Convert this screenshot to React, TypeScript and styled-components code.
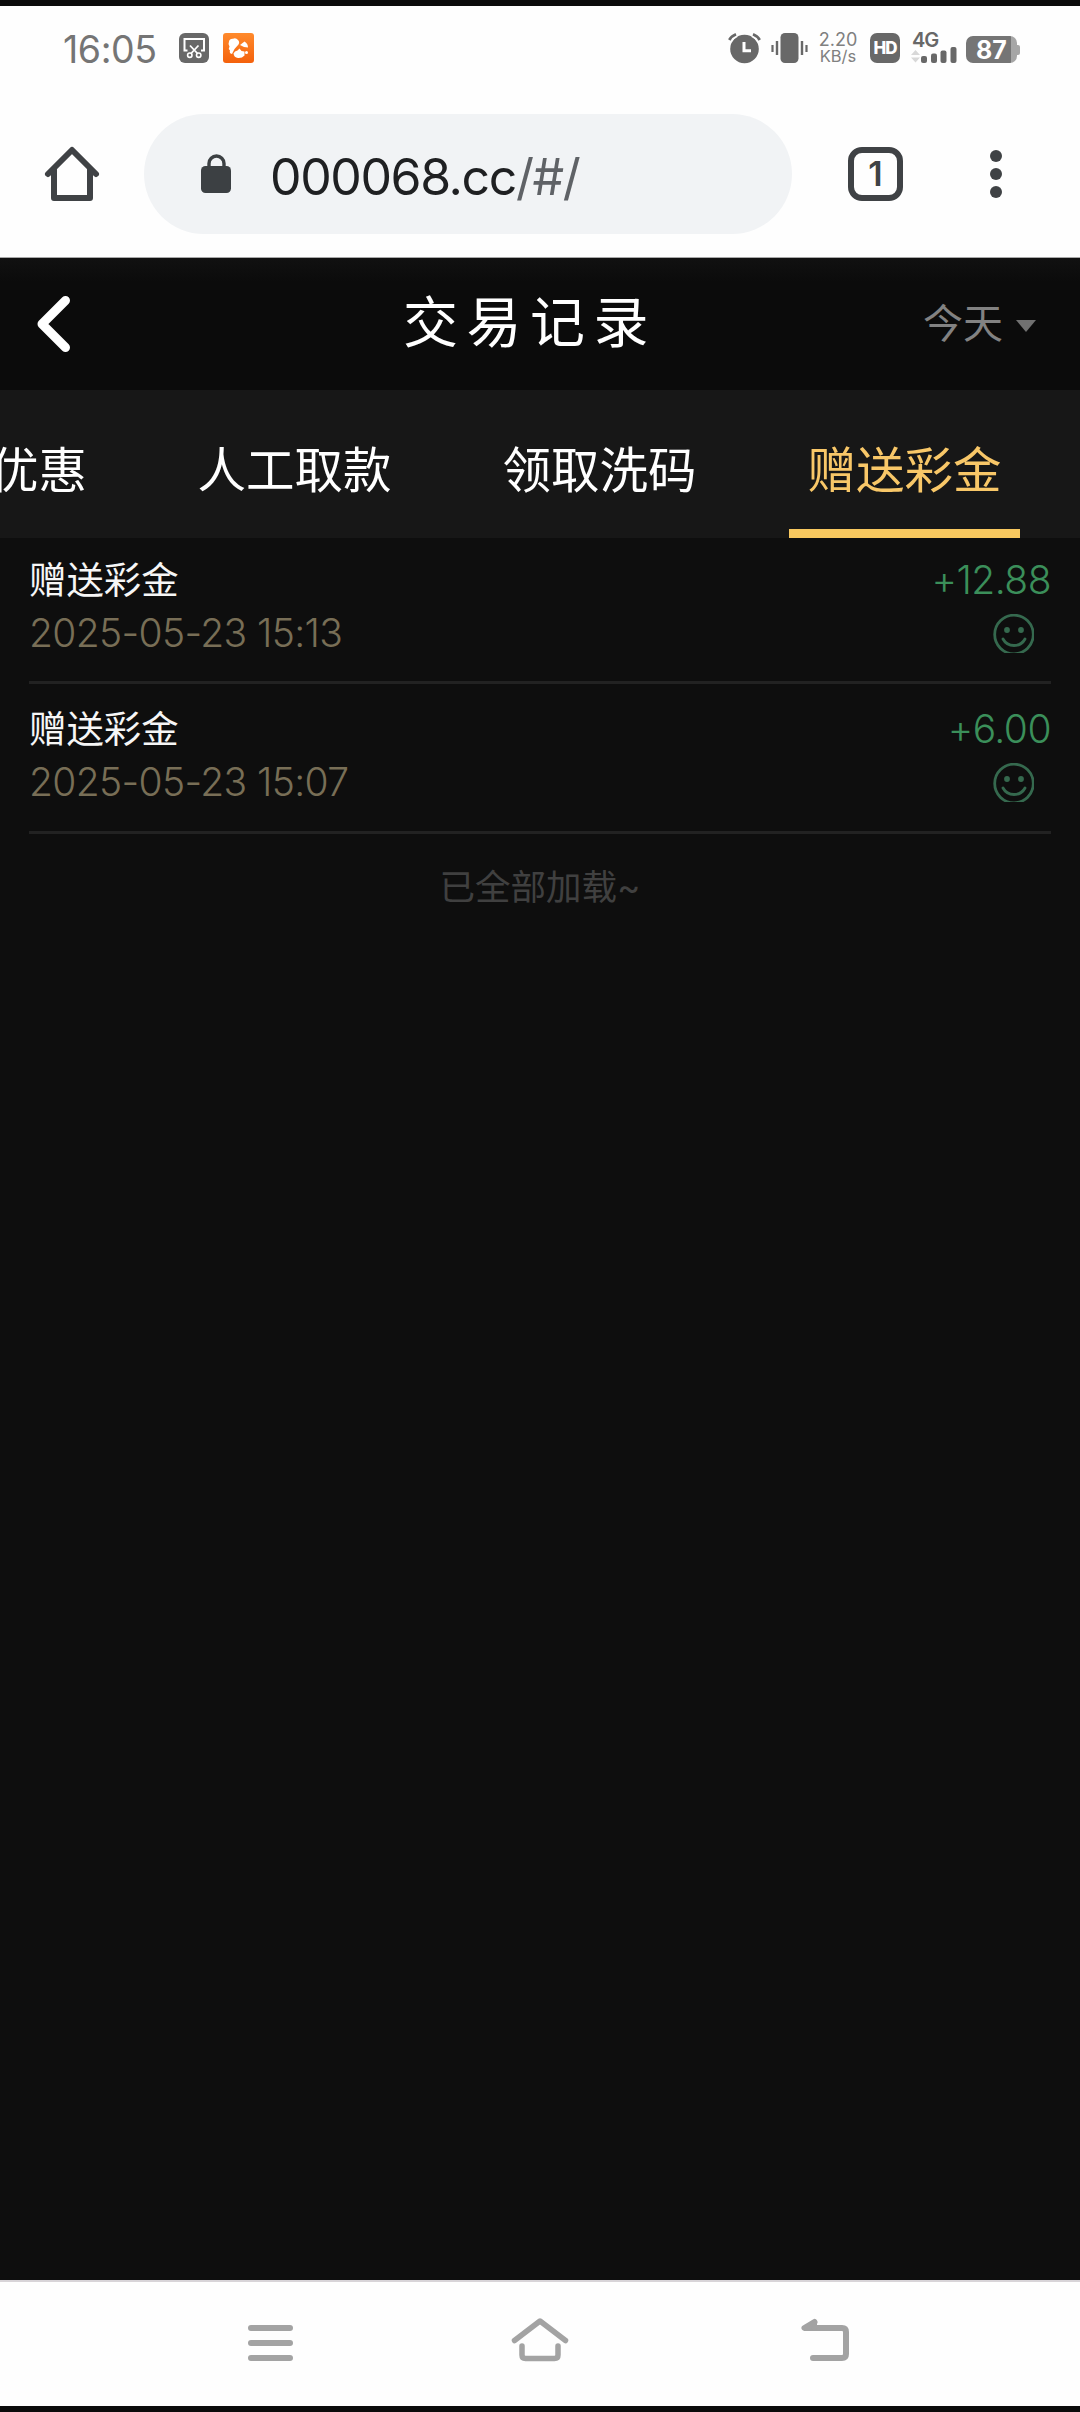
import React from 'react';
import styled, { createGlobalStyle } from 'styled-components';

const Global = createGlobalStyle`
  * { box-sizing: border-box; }
  body { margin: 0; background: #0e0e0e; }
`;

const Screen = styled.div`
  width: 1080px;
  height: 2412px;
  display: flex;
  flex-direction: column;
  overflow: hidden;
  background: #0e0e0e;
  border-top: 6px solid #0b0b0b;
  border-bottom: 6px solid #0b0b0b;
  font-family: Inter, 'Noto Sans CJK SC', sans-serif;
  svg { display: block; flex: none; overflow: visible; }
`;

const StatusBar = styled.div`
  height: 84px;
  flex: none;
  display: flex;
  align-items: center;
  justify-content: space-between;
  padding: 0 60px 0 63px;
  background: #fefefe;
`;

const StatusGroup = styled.div<{ $gap: number }>`
  display: flex;
  align-items: center;
  gap: ${p => p.$gap}px;
`;

const Clock = styled.span`
  width: 102px;
  font-size: 37.5px;
  line-height: 40px;
  letter-spacing: -0.4px;
  color: #757575;
  padding-top: 4px;
`;

const Speed = styled.div`
  width: 40px;
  margin-right: 1px;
  display: flex;
  flex-direction: column;
  align-items: center;
  font-size: 18px;
  line-height: 17px;
  color: #808080;
  white-space: nowrap;
`;

const SpeedUnit = styled.span`
  font-size: 16.5px;
`;

const AddressBar = styled.div`
  height: 168px;
  flex: none;
  display: flex;
  align-items: center;
  padding: 0 0 0 45px;
  background: #fefefe;
  border-bottom: 1px solid #a8a8a8;
`;

const UrlPill = styled.div`
  width: 648px;
  height: 120px;
  margin-left: 45px;
  border-radius: 60px;
  background: #f1f3f5;
  display: flex;
  align-items: center;
  padding-left: 57px;
`;

const UrlText = styled.span`
  margin-left: 39px;
  padding-top: 6px;
  font-size: 50px;
  line-height: 60px;
  letter-spacing: -1.4px;
  color: #1f2022;
  white-space: nowrap;
`;

const UrlPath = styled.span`
  color: #5f6266;
`;

const TabCount = styled.div`
  width: 55px;
  height: 54px;
  margin-left: 56px;
  border: 6px solid #3f4245;
  border-radius: 14px;
  display: flex;
  align-items: center;
  justify-content: center;
  font-size: 34px;
  font-weight: 600;
  color: #3f4245;
`;

const MenuDots = styled.div`
  margin-left: 87px;
  display: flex;
  flex-direction: column;
  gap: 6px;
`;

const Dot = styled.i`
  width: 12px;
  height: 12px;
  border-radius: 50%;
  background: #3f4245;
`;

const Header = styled.header`
  height: 132px;
  flex: none;
  display: grid;
  grid-template-columns: 300px 1fr 300px;
  align-items: center;
  background: linear-gradient(#111 0, #0b0b0b 24px);
`;

const BackButton = styled.div`
  padding-left: 36px;
`;

const Title = styled.h1`
  margin: 0;
  font-size: 55px;
  line-height: 80px;
  font-weight: 400;
  letter-spacing: 8.5px;
  padding: 0 20px 4px 0;
  text-align: center;
  color: #fff;
  white-space: nowrap;
`;

const DayFilter = styled.div`
  display: flex;
  align-items: center;
  justify-content: flex-end;
  gap: 13px;
  padding-right: 44px;
  font-size: 40px;
  line-height: 60px;
  color: #828282;
`;

const Caret = styled.i`
  margin-top: 4px;
  border: 10.5px solid transparent;
  border-top: 12px solid #717171;
  border-bottom: 0;
`;

const Tabs = styled.nav`
  height: 148px;
  flex: none;
  display: flex;
  justify-content: flex-end;
  gap: 74px;
  padding-right: 60px;
  background: #171717;
  overflow: hidden;
`;

const Tab = styled.div<{ $active?: boolean; $indent?: number }>`
  width: 231px;
  flex: none;
  display: flex;
  align-items: center;
  justify-content: center;
  padding-top: 15px;
  padding-left: ${p => p.$indent ?? 0}px;
  border-bottom: 9px solid ${p => (p.$active ? '#f8c85f' : 'transparent')};
  font-size: 48.5px;
  color: ${p => (p.$active ? '#f8c768' : '#fff')};
  white-space: nowrap;
`;

const List = styled.main`
  flex: 1;
  padding: 0 29px;
`;

const Record = styled.div`
  height: 150px;
  display: flex;
  justify-content: space-between;
  border-bottom: 3px solid #222;
  &:first-child { height: 146px; }
  &:first-child > div { padding-top: 16px; }
`;

const Info = styled.div`
  padding-top: 19px;
`;

const RecordName = styled.div`
  font-size: 37.4px;
  line-height: 54px;
  color: #f6f6f6;
`;

const RecordTime = styled.div`
  font-size: 39px;
  line-height: 50px;
  font-weight: 300;
  letter-spacing: -0.63px;
  color: #786e56;
  white-space: nowrap;
`;

const Result = styled.div`
  padding-top: 19px;
  display: flex;
  flex-direction: column;
  align-items: flex-end;
`;

const Amount = styled.div`
  font-size: 39px;
  line-height: 52px;
  font-weight: 300;
  letter-spacing: -0.5px;
  color: #3b8f5a;
`;

const FaceBox = styled.div`
  width: 41px;
  height: 39px;
  margin: 8px 17px 0 0;
  overflow: hidden;
`;

const EndNote = styled.p`
  margin: 27px 0 0;
  text-align: center;
  font-size: 35.5px;
  line-height: 54px;
  color: #404040;
`;

const NavBar = styled.footer`
  height: 126px;
  flex: none;
  display: flex;
  align-items: center;
  padding: 0 0 3px 248px;
  border-top: 2px solid #d8d4d8;
  background: #fefefe;
`;

const NavItem = styled.div<{ $before?: number }>`
  margin-left: ${p => p.$before ?? 0}px;
`;

const ScissorsIcon = () => (
  <svg width="30" height="30" viewBox="0 0 30 30" fill="none">
    <rect width="30" height="30" rx="6" fill="#686868" />
    <path d="M8.500 17.500H5.500V6H25v11.500H22" stroke="#fff" strokeWidth="2" />
    <path d="M11 12.500l7.500 8M19.500 12.500l-7.500 8" stroke="#fff" strokeWidth="1.800" />
    <circle cx="10.800" cy="22.200" r="2.200" stroke="#fff" strokeWidth="1.600" />
    <circle cx="19.700" cy="22.200" r="2.200" stroke="#fff" strokeWidth="1.600" />
  </svg>
);

const SquirrelIcon = () => (
  <svg width="31" height="30" viewBox="0 0 31 30">
    <defs>
      <linearGradient id="sq" x1="0" y1="0" x2="0" y2="1">
        <stop offset="0" stopColor="#ff8a2c" />
        <stop offset="1" stopColor="#f4610c" />
      </linearGradient>
    </defs>
    <rect width="31" height="30" rx="3" fill="url(#sq)" />
    <path d="M6 8.500q.5-3 4-2.800 3-1.200 5 1.300 2 2 .5 4.500l-4 4.500-2.500 5q-3-.5-2-3.500-2-2-.5-4Q4.800 11 6 8.500z" fill="#fff" />
    <path d="M17 12l4.500-3.500q3.500 2 3.500 6l-4-.5z" fill="#fff" />
    <path d="M10.500 20.500q1-2.500 4-3l2-2 2 2.500 3 .5 0 4q-2.500 2.800-6.500 2.500-4-.5-4.500-4.500z" fill="#fff" />
    <circle cx="23.500" cy="19.500" r="1.500" fill="#fff" />
  </svg>
);

const AlarmIcon = () => (
  <svg width="33" height="30" viewBox="0 0 33 30" fill="none">
    <circle cx="16.500" cy="16" r="14.300" fill="#686868" />
    <path d="M1.300 7.500Q3.500 3 8.500 1.200M31.700 7.500Q29.500 3 24.500 1.200" stroke="#fefefe" strokeWidth="6" />
    <path d="M1.300 7Q3.500 3 8 1.200M31.700 7Q29.500 3 25 1.200" stroke="#686868" strokeWidth="2.800" />
    <path d="M16 9v8.800H23" stroke="#fff" strokeWidth="3" />
  </svg>
);

const VibrateIcon = () => (
  <svg width="37" height="30" viewBox="0 0 37 30" fill="none" stroke="#686868">
    <rect x="9.500" width="18" height="30" rx="4.500" fill="#686868" stroke="none" />
    <path d="M1.500 12v7M35.500 12v7" strokeWidth="2.200" />
    <path d="M6 8v14M31 8v14" strokeWidth="2.400" />
  </svg>
);

const HdBadge = styled.div`
  width: 30px;
  height: 30px;
  margin-left: 1px;
  border-radius: 7px;
  background: #686868;
  color: #fff;
  font-size: 17px;
  font-weight: 800;
  line-height: 31px;
  letter-spacing: -1px;
  text-align: center;
`;

const Signal = styled.div`
  width: 46px;
  height: 30px;
  margin-left: 1px;
  position: relative;
`;

const SignalLabel = styled.span`
  position: absolute;
  left: 1px;
  top: -2px;
  font-size: 20px;
  line-height: 18px;
  font-weight: 600;
  letter-spacing: -1px;
  color: #686868;
`;

const SignalBars = () => (
  <svg width="46" height="30" viewBox="0 0 46 30" fill="#686868">
    <path d="M0 22l4.500-5 4.500 5zM0 24.500l4.500 5 4.500-5z" fill="#d8d8d8" />
    <rect x="10" y="23" width="6" height="7" rx="2" />
    <rect x="20" y="20.500" width="6" height="9.500" rx="2" />
    <rect x="29.500" y="17.500" width="6" height="12.500" rx="2" />
    <rect x="39.500" y="14" width="6" height="16" rx="2" />
  </svg>
);

const Battery = styled.div`
  width: 51px;
  height: 27px;
  margin: 3px 3px 0 -1px;
  border-radius: 7px;
  background: linear-gradient(90deg, #757575 45px, #a6a6a6 45px);
  position: relative;
  color: #fff;
  font-size: 25px;
  font-weight: 700;
  line-height: 28px;
  text-align: center;
  &::after {
    content: '';
    position: absolute;
    left: 51px;
    top: 9px;
    width: 3px;
    height: 10px;
    border-radius: 0 2px 2px 0;
    background: #a6a6a6;
  }
`;

const HomeIcon = () => (
  <svg width="54" height="54" viewBox="0 0 54 54" fill="none" stroke="#3f4245" strokeWidth="6" strokeLinecap="round" strokeLinejoin="round">
    <path d="M3 27L27 3l24 24" />
    <path d="M9 23v28h36V23" />
  </svg>
);

const LockIcon = () => (
  <svg width="30" height="39" viewBox="0 0 30 39" fill="none">
    <rect y="12" width="30" height="27" rx="4.500" fill="#3c4043" />
    <path d="M8 14V9.500a7.500 7.500 0 0 1 15 0V14" stroke="#3c4043" strokeWidth="3.400" />
  </svg>
);

const BackChevron = () => (
  <svg width="36" height="58" viewBox="0 0 36 58" fill="none" stroke="#fff" strokeWidth="9" strokeLinecap="round" strokeLinejoin="round">
    <path d="M29.500 5.500L6 29l23.500 23.500" />
  </svg>
);

const FaceIcon = () => (
  <svg width="42" height="42" viewBox="0 0 42 42" fill="none" stroke="#35694e" strokeWidth="2.800">
    <circle cx="21" cy="20.500" r="19.300" />
    <path d="M10 25q3.500 6.500 11 6.500T32 25" strokeLinecap="round" />
    <circle cx="14" cy="16" r="2.900" fill="#35694e" stroke="none" />
    <circle cx="28" cy="16" r="2.900" fill="#35694e" stroke="none" />
  </svg>
);

const RecentsIcon = () => (
  <svg width="45" height="46" viewBox="0 0 45 46" stroke="#a3a3a3" strokeWidth="6" strokeLinecap="round">
    <path d="M3 8h39M3 23h39M3 38h39" />
  </svg>
);

const NavHomeIcon = () => (
  <svg width="58" height="46" viewBox="0 0 58 46" fill="none" stroke="#a3a3a3" strokeWidth="5.500" strokeLinecap="round" strokeLinejoin="round">
    <path d="M3.500 20.500L29 1l25.500 19.500" />
    <path d="M11 26v9q0 3.500 3.500 3.500h29q3.500 0 3.500-3.500v-9" />
  </svg>
);

const NavBackIcon = () => (
  <svg width="48" height="46" viewBox="0 0 48 46" fill="none" stroke="#a3a3a3" strokeWidth="6" strokeLinecap="round" strokeLinejoin="round">
    <path d="M13.500 2L3.500 8H41q4 0 4 4v22q0 4-4 4H12" />
    <path d="M13 3v4" />
  </svg>
);

const tabs = [
  { label: '优惠', indent: 98 },
  { label: '人工取款' },
  { label: '领取洗码' },
  { label: '赠送彩金', active: true },
];

const records = [
  { name: '赠送彩金', time: '2025-05-23 15:13', amount: '+12.88' },
  { name: '赠送彩金', time: '2025-05-23 15:07', amount: '+6.00' },
];

export default function App() {
  return (
    <Screen>
      <Global />
      <StatusBar>
        <StatusGroup $gap={14}>
          <Clock>16:05</Clock>
          <ScissorsIcon />
          <SquirrelIcon />
        </StatusGroup>
        <StatusGroup $gap={10}>
          <AlarmIcon />
          <VibrateIcon />
          <Speed>
            2.20
            <SpeedUnit>KB/s</SpeedUnit>
          </Speed>
          <HdBadge>HD</HdBadge>
          <Signal>
            <SignalLabel>4G</SignalLabel>
            <SignalBars />
          </Signal>
          <Battery>87</Battery>
        </StatusGroup>
      </StatusBar>
      <AddressBar>
        <HomeIcon />
        <UrlPill>
          <LockIcon />
          <UrlText>
            000068.cc<UrlPath>/#/</UrlPath>
          </UrlText>
        </UrlPill>
        <TabCount>1</TabCount>
        <MenuDots>
          <Dot />
          <Dot />
          <Dot />
        </MenuDots>
      </AddressBar>
      <Header>
        <BackButton>
          <BackChevron />
        </BackButton>
        <Title>交易记录</Title>
        <DayFilter>
          今天
          <Caret />
        </DayFilter>
      </Header>
      <Tabs>
        {tabs.map(t => (
          <Tab key={t.label} $active={t.active} $indent={t.indent}>
            {t.label}
          </Tab>
        ))}
      </Tabs>
      <List>
        {records.map(r => (
          <Record key={r.time}>
            <Info>
              <RecordName>{r.name}</RecordName>
              <RecordTime>{r.time}</RecordTime>
            </Info>
            <Result>
              <Amount>{r.amount}</Amount>
              <FaceBox>
                <FaceIcon />
              </FaceBox>
            </Result>
          </Record>
        ))}
        <EndNote>已全部加载~</EndNote>
      </List>
      <NavBar>
        <NavItem>
          <RecentsIcon />
        </NavItem>
        <NavItem $before={218}>
          <NavHomeIcon />
        </NavItem>
        <NavItem $before={232}>
          <NavBackIcon />
        </NavItem>
      </NavBar>
    </Screen>
  );
}
